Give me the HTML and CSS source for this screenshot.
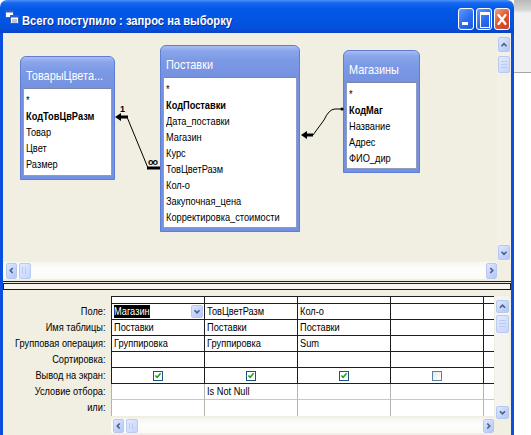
FILE: index.html
```html
<!DOCTYPE html>
<html lang="ru">
<head>
<meta charset="utf-8">
<title>Всего поступило : запрос на выборку</title>
<link rel="stylesheet" href="styles.css">
</head>
<body>
<div class="screen">
  <div class="window">
    <div class="titlebar">
      <svg class="appicon" width="14" height="14" viewBox="0 0 14 14">
        <rect x="0.5" y="0.5" width="8" height="7" fill="#fff" stroke="#3a5fb0"/>
        <rect x="0.5" y="0.5" width="8" height="2" fill="#2a5bd6"/>
        <rect x="5.5" y="5.5" width="8" height="8" fill="#fff" stroke="#3a5fb0"/>
        <rect x="5.5" y="5.5" width="8" height="2" fill="#2a5bd6"/>
        <line x1="7" y1="10" x2="12" y2="10" stroke="#7a8cc0"/>
        <line x1="7" y1="12" x2="12" y2="12" stroke="#7a8cc0"/>
      </svg>
      <span class="title"><span class="tt">Всего поступило : запрос на выборку</span></span>
      <div class="tbtns">
        <span class="tb tb-min"></span>
        <span class="tb tb-max"></span>
        <span class="tb tb-close">
          <svg width="14" height="19" viewBox="0 0 14 19"><path d="M3.5 5 L10.5 14 M10.5 5 L3.5 14" stroke="#fff" stroke-width="2.2" stroke-linecap="round"/></svg>
        </span>
      </div>
    </div>
    <div class="client">
      <div class="upper">
        <div class="canvas">
          <div class="flist fl-tov">
            <div class="fl-head"><span class="ht">ТоварыЦвета...</span></div>
            <div class="fl-body">
              <div class="fl-row">*</div>
              <div class="fl-row key">КодТовЦвРазм</div>
              <div class="fl-row">Товар</div>
              <div class="fl-row">Цвет</div>
              <div class="fl-row">Размер</div>
            </div>
          </div>
          <div class="flist fl-post">
            <div class="fl-head"><span class="ht">Поставки</span></div>
            <div class="fl-body">
              <div class="fl-row">*</div>
              <div class="fl-row key">КодПоставки</div>
              <div class="fl-row">Дата_поставки</div>
              <div class="fl-row">Магазин</div>
              <div class="fl-row">Курс</div>
              <div class="fl-row">ТовЦветРазм</div>
              <div class="fl-row">Кол-о</div>
              <div class="fl-row">Закупочная_цена</div>
              <div class="fl-row">Корректировка_стоимости</div>
            </div>
          </div>
          <div class="flist fl-mag">
            <div class="fl-head"><span class="ht">Магазины</span></div>
            <div class="fl-body">
              <div class="fl-row">*</div>
              <div class="fl-row key">КодМаг</div>
              <div class="fl-row">Название</div>
              <div class="fl-row">Адрес</div>
              <div class="fl-row">ФИО_дир</div>
            </div>
          </div>
          <svg class="links" width="494" height="229" viewBox="3 33 494 229">
            <polygon points="115,117 121,113 121,121" fill="#000"/>
            <line x1="120" y1="117" x2="128" y2="117" stroke="#000" stroke-width="3"/>
            <text x="120" y="112" class="rel-lbl">1</text>
            <line x1="127" y1="117" x2="148" y2="168" stroke="#000" stroke-width="1"/>
            <line x1="147" y1="168" x2="160" y2="168" stroke="#000" stroke-width="3"/>
            <text x="148" y="165" class="rel-inf">oo</text>
            <polygon points="301,135 307,131 307,139" fill="#000"/>
            <line x1="306" y1="135" x2="313" y2="135" stroke="#000" stroke-width="3"/>
            <path d="M313 135 L324 120 Q329 109 335 109 L342 109" fill="none" stroke="#000" stroke-width="1"/>
            <circle cx="342" cy="109" r="1.6" fill="#000"/>
          </svg>
        </div>
        <div class="vscroll">
          <span class="sbtn sb-up"><svg width="12" height="14" viewBox="0 0 12 14"><polyline points="3,8.5 6,5.5 9,8.5" fill="none" stroke="#4d6185" stroke-width="2"/></svg></span>
          <span class="thumb vthumb"></span>
          <span class="sfill"></span>
          <span class="sbtn sb-dn"><svg width="12" height="14" viewBox="0 0 12 14"><polyline points="3,5.5 6,8.5 9,5.5" fill="none" stroke="#4d6185" stroke-width="2"/></svg></span>
        </div>
        <div class="hscroll">
          <span class="sbtn hb"><svg width="11" height="15" viewBox="0 0 11 15"><polyline points="7,4.5 4,7.5 7,10.5" fill="none" stroke="#4d6185" stroke-width="2"/></svg></span>
          <span class="thumb hthumb"></span>
          <span class="sfill"></span>
          <span class="sbtn hb"><svg width="11" height="15" viewBox="0 0 11 15"><polyline points="4,4.5 7,7.5 4,10.5" fill="none" stroke="#4d6185" stroke-width="2"/></svg></span>
        </div>
        <div class="corner"></div>
      </div>
      <div class="splitter"><div class="split-line"></div><div class="split-box"></div></div>
      <div class="lower">
        <div class="labels">
          <div class="lbl">Поле:</div>
          <div class="lbl">Имя таблицы:</div>
          <div class="lbl">Групповая операция:</div>
          <div class="lbl">Сортировка:</div>
          <div class="lbl">Вывод на экран:</div>
          <div class="lbl">Условие отбора:</div>
          <div class="lbl">или:</div>
        </div>
        <div class="gridcol">
          <div class="qgrid">
            <div class="c sel first"></div><div class="c sel"></div><div class="c sel"></div><div class="c sel"></div><div class="c sel last"></div>

            <div class="c first field"><span class="hl"><span class="t">Магазин</span></span><span class="combo"><svg width="12" height="13" viewBox="0 0 12 13"><polyline points="3,5 6,8 9,5" fill="none" stroke="#4d6185" stroke-width="2"/></svg></span></div>
            <div class="c"><span class="t">ТовЦветРазм</span></div><div class="c"><span class="t">Кол-о</span></div><div class="c"></div><div class="c last"></div>

            <div class="c first"><span class="t">Поставки</span></div><div class="c"><span class="t">Поставки</span></div><div class="c"><span class="t">Поставки</span></div><div class="c"></div><div class="c last"></div>

            <div class="c first"><span class="t">Группировка</span></div><div class="c"><span class="t">Группировка</span></div><div class="c"><span class="t">Sum</span></div><div class="c"></div><div class="c last"></div>

            <div class="c first"></div><div class="c"></div><div class="c"></div><div class="c"></div><div class="c last"></div>

            <div class="c first chk"><span class="cb"><svg width="9" height="9" viewBox="0 0 9 9"><polyline points="1.5,4.5 3.5,6.5 7.5,2" fill="none" stroke="#21a121" stroke-width="1.8"/></svg></span></div>
            <div class="c chk"><span class="cb"><svg width="9" height="9" viewBox="0 0 9 9"><polyline points="1.5,4.5 3.5,6.5 7.5,2" fill="none" stroke="#21a121" stroke-width="1.8"/></svg></span></div>
            <div class="c chk"><span class="cb"><svg width="9" height="9" viewBox="0 0 9 9"><polyline points="1.5,4.5 3.5,6.5 7.5,2" fill="none" stroke="#21a121" stroke-width="1.8"/></svg></span></div>
            <div class="c chk"><span class="cb empty"></span></div>
            <div class="c last"></div>

            <div class="c first soft"></div><div class="c soft"><span class="t">Is Not Null</span></div><div class="c soft"></div><div class="c soft"></div><div class="c soft last"></div>

            <div class="c first soft end"></div><div class="c soft end"></div><div class="c soft end"></div><div class="c soft end"></div><div class="c soft end last"></div>
          </div>
          <div class="hscroll2">
            <span class="sbtn hb2"><svg width="11" height="14" viewBox="0 0 11 14"><polyline points="7,4 4,7 7,10" fill="none" stroke="#4d6185" stroke-width="2"/></svg></span>
            <span class="thumb hthumb2"></span>
            <span class="sfill"></span>
            <span class="sbtn hb2"><svg width="11" height="14" viewBox="0 0 11 14"><polyline points="4,4 7,7 4,10" fill="none" stroke="#4d6185" stroke-width="2"/></svg></span>
          </div>
        </div>
        <div class="vscroll2">
          <span class="sbtn vb2"><svg width="13" height="13" viewBox="0 0 13 13"><polyline points="3.5,8 6.5,5 9.5,8" fill="none" stroke="#4d6185" stroke-width="2"/></svg></span>
          <span class="thumb vthumb2"></span>
          <span class="sfill"></span>
          <span class="sbtn vb2"><svg width="13" height="13" viewBox="0 0 13 13"><polyline points="3.5,5 6.5,8 9.5,5" fill="none" stroke="#4d6185" stroke-width="2"/></svg></span>
        </div>
      </div>
    </div>
  </div>
  <div class="side"></div>
</div>
</body>
</html>
```
FILE: styles.css
```css
* { box-sizing: border-box; }
html, body { margin: 0; padding: 0; }
body {
  background: #fff;
  font-family: "Liberation Sans", Arial, sans-serif;
  font-size: 11px;
  color: #000;
  overflow: hidden;
}
.screen { display: flex; width: 531px; height: 435px; overflow: hidden; }
.window { width: 514px; flex: none; display: flex; flex-direction: column; height: 435px; }
.side {
  flex: 1;
  background: linear-gradient(#b9b9b9 0, #d6d6d6 10px, #f1f1f1 13px, #f1f1f1 72px, #a6a6a6 72px, #a6a6a6 73px, #fff 73px);
}

/* title bar */
.titlebar {
  height: 33px;
  flex: none;
  border-radius: 7px 7px 0 0;
  background: linear-gradient(#4a90fb 0, #1468f0 3px, #0458e6 9px, #0255e3 60%, #0450dc 85%, #0a43c6 100%);
  display: flex;
  align-items: flex-start;
  padding: 0 4px 0 5px;
}
.appicon { flex: none; margin: 10px 3px 0 0; }
.title {
  flex: 1;
  padding-top: 13px;
  line-height: 15px;
  white-space: nowrap;
  overflow: hidden;
}
.tt {
  display: inline-block;
  color: #fff;
  font-weight: bold;
  font-size: 13px;
  text-shadow: 1px 1px 0 #0b2b9a;
  transform: scaleX(0.86);
  transform-origin: 0 50%;
}
.tbtns { display: flex; gap: 2px; margin-top: 8px; }
.tb {
  width: 16px; height: 22px;
  border: 1px solid #fff;
  border-radius: 3px;
  position: relative;
  background: linear-gradient(135deg, #5d9bff 0%, #2a6cf0 55%, #1d55d6 100%);
  box-shadow: inset 0 0 1px #9cc0ff;
}
.tb-min::after {
  content: ""; position: absolute; left: 3px; bottom: 4px;
  width: 6px; height: 3px; background: #fff;
}
.tb-max::after {
  content: ""; position: absolute; left: 3px; top: 3px;
  width: 8px; height: 12px;
  border: 1px solid #fff; border-top-width: 3px;
}
.tb-close {
  background: linear-gradient(135deg, #f0a080 0%, #e0562c 50%, #c8401a 100%);
  display: flex; align-items: center; justify-content: center;
}

/* client area */
.client {
  flex: 1;
  background: #f1efe2;
  border-left: 3px solid #0b4ee2;
  border-right: 3px solid #0b4ee2;
  display: flex;
  flex-direction: column;
  min-height: 0;
}
.upper {
  display: grid;
  grid-template-columns: 494px 14px;
  grid-template-rows: 229px 17px;
  flex: none;
}
.canvas { position: relative; overflow: hidden; background: #f1efe2; }

/* field lists */
.flist {
  position: absolute;
  display: flex;
  flex-direction: column;
  background: #7391e0;
  border: 1px solid #5f7dd2;
  border-radius: 6px 6px 0 0;
  padding: 0 2px 3px 2px;
}
.fl-tov { left: 17px; top: 23px; width: 95px; height: 124px; }
.fl-post { left: 157px; top: 12px; width: 140px; height: 187px; }
.fl-mag { left: 340px; top: 17px; width: 77px; height: 123px; }
.fl-head {
  height: 31px;
  flex: none;
  margin: 0 -2px;
  padding: 6px 0 0 5px;
  border-radius: 5px 5px 0 0;
  background: linear-gradient(#a9bdf3 0, #8aa5ea 5px, #7c99e5 14px, #7592e1 100%);
  line-height: 25px;
  white-space: nowrap;
  overflow: hidden;
}
.ht {
  display: inline-block;
  color: #fff;
  font-size: 13px;
  transform: scaleX(0.84);
  transform-origin: 0 50%;
}
.fl-body {
  flex: 1;
  background: #fff;
  border: 1px solid #8d9cc4;
  border-top-color: #7a86a8;
  padding: 3px 0 0 2px;
  overflow: hidden;
}
.fl-row {
  height: 16px; line-height: 16px;
  white-space: nowrap;
  width: 119%;
  transform: scaleX(0.84);
  transform-origin: 0 50%;
}
.fl-row.key { font-weight: bold; }
.links { position: absolute; left: 0; top: 0; }
.rel-lbl { font: bold 9px "Liberation Sans", Arial, sans-serif; }
.rel-inf { font: bold 9px "Liberation Sans", Arial, sans-serif; letter-spacing: -1px; }

/* scroll bars */
.sbtn {
  display: flex; align-items: center; justify-content: center;
  flex: none;
  background: linear-gradient(135deg, #dfe8fe 0%, #c4d4fb 55%, #b4c8f7 100%);
  border: 1px solid #b6c8f2;
  border-radius: 2px;
}
.thumb {
  flex: none;
  background: linear-gradient(135deg, #e2eafe 0%, #ccd9fb 60%, #bccdf7 100%);
  border: 1px solid #b9caf3;
  border-radius: 2px;
}
.sfill { flex: 1; }
.vscroll {
  display: flex; flex-direction: column; align-items: center;
  padding: 4px 0 2px 0;
  background: #f3f1e5;
}
.sb-up, .sb-dn { width: 12px; height: 15px; }
.vthumb {
  width: 12px; height: 17px; margin-top: 4px;
  background-image: repeating-linear-gradient(#bccbf0 0 1px, transparent 1px 3px), linear-gradient(135deg, #e2eafe, #c6d5fb);
  background-size: 6px 8px, auto;
  background-position: center, 0 0;
  background-repeat: no-repeat;
}
.hscroll {
  display: flex; align-items: center;
  padding: 0 0 0 3px;
  background: linear-gradient(#f6f6f2, #fdfdfb 40%, #fbfbf8);
}
.hb { width: 11px; height: 16px; }
.hthumb {
  width: 12px; height: 16px; margin-left: 2px;
  background-image: repeating-linear-gradient(90deg, #bccbf0 0 1px, transparent 1px 3px), linear-gradient(135deg, #e2eafe, #c6d5fb);
  background-size: 6px 7px, auto;
  background-position: center, 0 0;
  background-repeat: no-repeat;
}
.corner { background: #f1efe2; }

/* splitter */
.splitter { height: 11px; flex: none; padding-top: 2px; }
.split-line { height: 1px; background: #1e1e1e; }
.split-box { height: 7px; margin-top: 1px; border: 1px solid #1e1e1e; background: #f7f6ef; }

/* lower pane */
.lower { flex: 1; display: flex; padding-top: 6px; }
.labels { width: 108px; flex: none; padding-top: 7px; }
.lbl {
  height: 16px; line-height: 16px;
  text-align: right;
  padding-right: 6px;
  white-space: nowrap;
  width: 119%;
  margin-left: -19%;
  transform: scaleX(0.84);
  transform-origin: 100% 50%;
}
.gridcol { width: 383px; flex: none; display: flex; flex-direction: column; }
.qgrid {
  display: grid;
  grid-template-columns: 94px 93px 93px 93px 10px;
  grid-auto-rows: 16px;
  grid-template-rows: 7px;
  border-top: 1px solid #1e1e1e;
}
.c {
  background: #fff;
  border-right: 1px solid #1e1e1e;
  border-bottom: 1px solid #1e1e1e;
  padding-left: 2px;
  line-height: 15px;
  white-space: nowrap;
  overflow: hidden;
}
.t {
  display: inline-block;
  transform: scaleX(0.84);
  transform-origin: 0 50%;
}
.c.first { border-left: 1px solid #1e1e1e; }
.c.last { border-right: none; }
.c.sel { height: 7px; }
.c.soft { border-right-color: #b4b4ac; border-bottom-color: #c8c8c0; }
.c.first.soft { border-left-color: #b4b4ac; }
.c.end { border-bottom: none; }
.field { display: flex; align-items: center; justify-content: space-between; padding-right: 0; }
.hl {
  background: #000;
  color: #fff;
  line-height: 13px;
  width: 36px;
  overflow: hidden;
  white-space: nowrap;
}
.combo {
  width: 12px; height: 13px;
  display: flex; align-items: center; justify-content: center;
  background: linear-gradient(135deg, #dfe8fe 0%, #c4d4fb 55%, #b4c8f7 100%);
  border: 1px solid #b6c8f2;
  border-radius: 2px;
  margin-right: 1px;
}
.chk { display: flex; align-items: center; justify-content: center; padding-left: 0; }
.cb {
  width: 10px; height: 10px;
  border: 1px solid #1c5180;
  background: #fff;
  display: flex; align-items: center; justify-content: center;
}
.cb.empty { border-color: #5b7fa8; background: linear-gradient(135deg, #e8e8e2, #fff); }
.hscroll2 {
  height: 15px; margin-top: 2px;
  display: flex; align-items: center;
  padding-left: 2px;
  background: linear-gradient(#f4f4f0, #fdfdfb 40%, #fafaf6);
}
.hb2 { width: 11px; height: 14px; }
.hthumb2 {
  width: 12px; height: 14px; margin-left: 2px;
  background-image: repeating-linear-gradient(90deg, #bccbf0 0 1px, transparent 1px 3px), linear-gradient(135deg, #e2eafe, #c6d5fb);
  background-size: 6px 6px, auto;
  background-position: center, 0 0;
  background-repeat: no-repeat;
}
.vscroll2 {
  width: 14px; flex: none;
  display: flex; flex-direction: column; align-items: center;
  padding: 4px 0 0 0;
  height: 123px;
  margin-left: 1px;
  background: #f5f4ee;
}
.vb2 { width: 13px; height: 13px; }
.vthumb2 {
  width: 13px; height: 18px; margin-top: 2px;
  background-image: repeating-linear-gradient(#bccbf0 0 1px, transparent 1px 3px), linear-gradient(135deg, #e2eafe, #c6d5fb);
  background-size: 7px 8px, auto;
  background-position: center, 0 0;
  background-repeat: no-repeat;
}
```
